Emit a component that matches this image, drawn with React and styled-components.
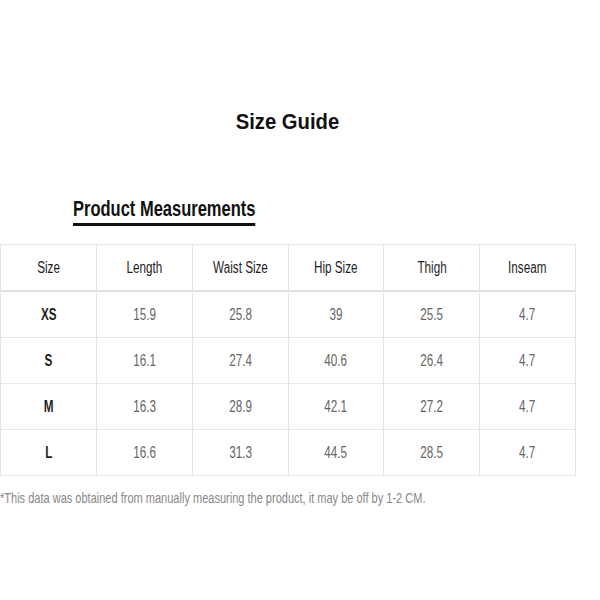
import React from "react";
import styled, { createGlobalStyle } from "styled-components";

const Global = createGlobalStyle`
  html, body { margin: 0; padding: 0; background: #fff; }
  body { font-family: "Liberation Sans", Arial, sans-serif; }
`;

const Page = styled.div`
  width: 600px;
  height: 600px;
  display: flex;
  flex-direction: column;
  background: #fff;
  overflow: hidden;
`;

const Title = styled.h1`
  margin: 107px 0 0 0;
  font-size: 22px;
  font-weight: 700;
  color: #111;
  text-align: center;
  width: 575px;
  line-height: 30px;
  transform: scaleX(0.92);
`;

const Subtitle = styled.h2`
  margin: 59px 0 0 73px;
  align-self: flex-start;
  font-size: 22px;
  font-weight: 700;
  color: #111;
  line-height: 26px;
  padding-bottom: 1px;
  border-bottom: 3px solid #111;
  transform: scaleX(0.75);
  transform-origin: left center;
`;

const Table = styled.div`
  margin-top: 18px;
  width: 575px;
  display: grid;
  grid-template-columns: repeat(6, 1fr);
  border-top: 1px solid #e4e4e4;
  border-left: 1px solid #e4e4e4;
`;

const Cell = styled.div`
  height: 45px;
  display: flex;
  align-items: center;
  justify-content: center;
  border-right: 1px solid #e4e4e4;
  border-bottom: ${(p) => (p.$head ? "2px solid #e0e0e0" : "1px solid #e8e8e8")};
  font-size: 16px;
  color: ${(p) => (p.$strong ? "#1e1e1e" : "#666")};
  font-weight: ${(p) => (p.$bold ? 700 : 400)};
`;

const Narrow = styled.span`
  display: inline-block;
  white-space: nowrap;
  transform: scaleX(0.73);
`;

const Note = styled.p`
  margin: 14px 0 0 0;
  font-size: 14.5px;
  color: #888;
  white-space: nowrap;
  transform: scaleX(0.76);
  transform-origin: left center;
`;

const head = ["Size", "Length", "Waist Size", "Hip Size", "Thigh", "Inseam"];
const rows = [
  ["XS", "15.9", "25.8", "39", "25.5", "4.7"],
  ["S", "16.1", "27.4", "40.6", "26.4", "4.7"],
  ["M", "16.3", "28.9", "42.1", "27.2", "4.7"],
  ["L", "16.6", "31.3", "44.5", "28.5", "4.7"],
];

export default function App() {
  return (
    <>
      <Global />
      <Page>
        <Title>Size Guide</Title>
        <Subtitle>Product Measurements</Subtitle>
        <Table>
          {head.map((h) => (
            <Cell key={h} $head $strong>
              <Narrow>{h}</Narrow>
            </Cell>
          ))}
          {rows.map((r) =>
            r.map((v, i) => (
              <Cell key={r[0] + i} $strong={i === 0} $bold={i === 0}>
                <Narrow>{v}</Narrow>
              </Cell>
            ))
          )}
        </Table>
        <Note>*This data was obtained from manually measuring the product, it may be off by 1-2 CM.</Note>
      </Page>
    </>
  );
}
